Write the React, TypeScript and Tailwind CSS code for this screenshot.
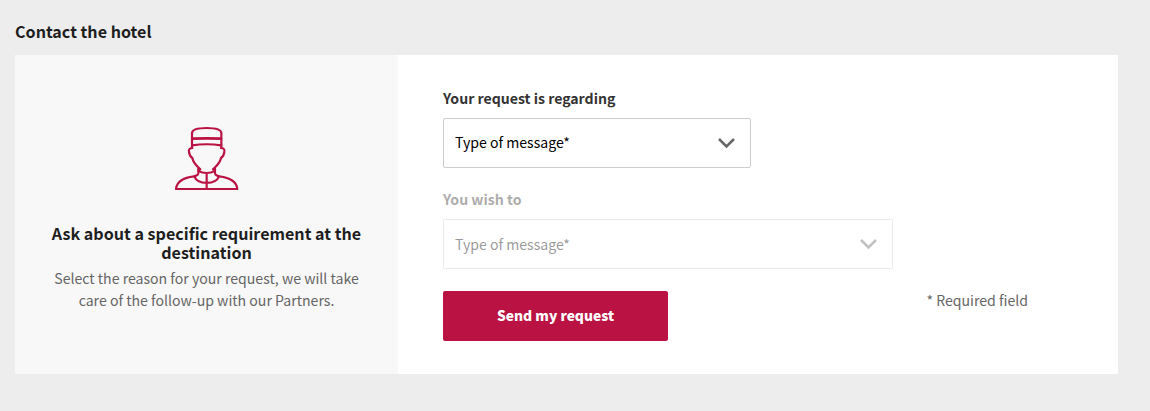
import React, { useState } from 'react';

const BellboyIcon = () => (
  <svg
    viewBox="30 33 192 192"
    className="w-16 h-16"
    fill="none"
    stroke="#ba1343"
    strokeWidth={6.5}
    strokeLinecap="round"
    strokeLinejoin="round"
    aria-hidden="true"
  >
    {/* Hat */}
    <path d="M81 98V54c0-10 14-15 44-15s44 5 44 15v44" />
    <path d="M82 71c28-1 58-1 86 0" strokeWidth={8} />
    <path d="M81 91c28-4 60-4 88 0" />
    {/* Face */}
    <path d="M82 99c-10 0-11 6-10 12 1 8 4 14 10 18 3 16 12 22 24 34l-5 2M168 99c10 0 11 6 10 12-1 8-4 14-10 18-3 16-12 22-24 34l5 2" />
    {/* Jacket */}
    <path d="M100 160v14c0 5-4 8-13 10-32 4-52 18-54 38h184c-2-20-22-34-54-38-9-2-13-5-13-10v-14" />
    <path d="M101 168c13 8 35 8 48 0M88 184c10 26 64 26 74 0M125 175v47" />
  </svg>
);

const ChevronIcon = () => (
  <svg
    viewBox="0 0 18 12"
    className="w-[18px] h-3"
    fill="none"
    stroke="#666"
    strokeWidth={2.5}
    aria-hidden="true"
  >
    <path d="M1 2 8.500 9.500 16 2" />
  </svg>
);

interface SelectFieldProps {
  label: string;
  width: string;
  disabled?: boolean;
}

const SelectField = ({ label, width, disabled = false }: SelectFieldProps) => (
  <div className={disabled ? 'opacity-40' : ''}>
    <p className="font-bold text-[14.100px] leading-5 text-[#333]">{label}</p>
    <button
      type="button"
      disabled={disabled}
      className={`${width} mt-2.5 h-[50px] pl-[11px] pr-3.5 flex items-center justify-between bg-white border border-[#ccc] rounded-xs text-[14.100px] leading-5 text-black`}
    >
      <span className={disabled ? '' : 'pb-0.5'}>Type of message*</span>
      <ChevronIcon />
    </button>
  </div>
);

const App = () => {
  const [sent, setSent] = useState(false);

  const handleSubmit = (e: React.FormEvent) => {
    e.preventDefault();
    setSent(true);
  };

  return (
    <div className="min-h-screen bg-[#ededed] pl-[15px] pr-8 pt-5 font-['Noto_Sans_CJK_SC','Noto_Sans',sans-serif]">
      <h2 className="font-bold text-[16.100px] leading-[22px] text-[#1e1e1e]">Contact the hotel</h2>

      <div className="mt-[13px] h-[319px] flex bg-white">
        {/* Intro */}
        <div className="w-[383px] shrink-0 bg-[#f8f8f8] pt-[71px] px-7 flex flex-col items-center text-center">
          <BellboyIcon />
          <h3 className="mt-[34px] font-bold text-[16.100px] leading-[19px] text-[#1e1e1e]">
            Ask about a specific requirement at the destination
          </h3>
          <p className="mt-[5px] text-[14.100px] leading-[22px] text-[#666]">
            Select the reason for your request, we will take care of the follow-up with our Partners.
          </p>
        </div>

        {/* Form */}
        <form onSubmit={handleSubmit} className="flex-1 pl-[45px] pr-[90px] pt-[33px]">
          <SelectField label="Your request is regarding" width="w-[308px]" />
          <div className="mt-[21px]">
            <SelectField label="You wish to" width="w-[450px]" disabled />
          </div>
          <div className="mt-[22px] flex justify-between">
            <button
              type="submit"
              disabled={sent}
              className="w-[225px] h-[50px] pb-0.5 rounded-xs bg-[#ba1343] text-white font-black text-[13.800px]"
            >
              Send my request
            </button>
            <p className="-mt-px text-[14.100px] leading-5 text-[#666]">* Required field</p>
          </div>
        </form>
      </div>
    </div>
  );
};

export default App;
